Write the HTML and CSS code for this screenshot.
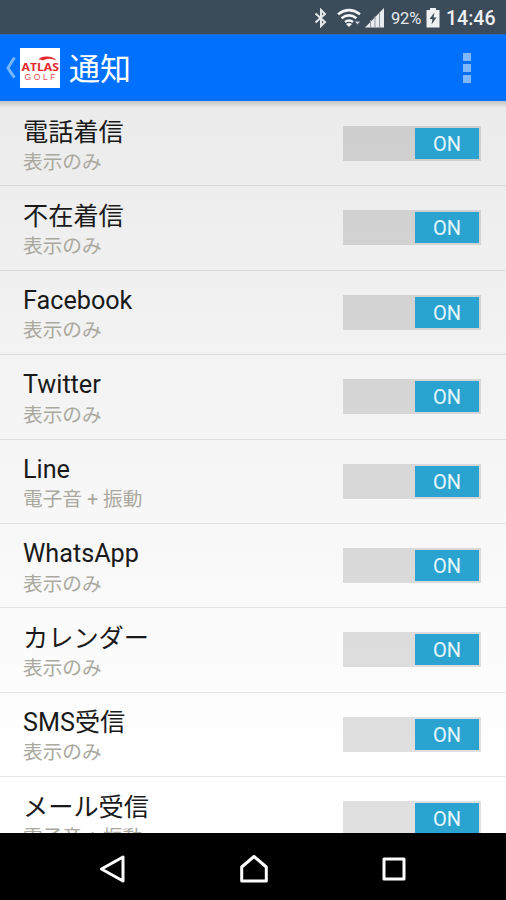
FILE: index.html
```html
<!DOCTYPE html>
<html lang="ja">
<head>
  <meta charset="UTF-8">
  <meta name="viewport" content="width=device-width, initial-scale=1.0">
  <title>通知</title>
  <link rel="stylesheet" href="styles.css">
</head>
<body>
  <div class="status-bar">
    <svg class="bluetooth" width="14" height="20" viewBox="0 0 14 20">
      <path d="M1.500 5.500 11 14 7 18V2l4 4-9.500 8.500" fill="none" stroke="#e4e8eb" stroke-width="2"/>
    </svg>
    <svg class="wifi" width="24" height="20" viewBox="0 0 24 20">
      <g fill="none" stroke="#f1f3f4" stroke-width="2.6">
        <path d="M1 6.200q11-8 22 0"/>
        <path d="M4.500 10.200q7.500-5.500 15 0"/>
        <path d="M8 14q4-3 8 0"/>
      </g>
      <path d="M9 16q3-2 6 0l-3 3z" fill="#f1f3f4"/>
      <path d="M18 13.500h5l-2.500 3z" fill="#c8ced3"/>
    </svg>
    <svg class="signal" width="20" height="20" viewBox="0 0 20 20">
      <path d="M0 19.500 19 0v19.500z" fill="#e9ecee"/>
      <path d="M5.500 12v8M10 8v12M14.500 4v16" stroke="#8b98a2" stroke-width="1"/>
    </svg>
    <span class="percent">92%</span>
    <svg class="battery" width="14" height="20" viewBox="0 0 14 20">
      <path d="M4 0h6v2h3.500v17.500H.5V2H4z" fill="#eef0f2"/>
      <path d="M8.500 4.500 3.500 11h3l-1 5.500 5-7H7.500z" fill="#3c4b57"/>
    </svg>
    <span class="clock">14:46</span>
  </div>

  <div class="header">
    <svg class="back" width="10" height="24" viewBox="0 0 10 24">
      <path d="M8.500 1.500Q5 7 2 12q3 5 6.500 9.500" fill="none" stroke="#75b7ff" stroke-width="3"/>
    </svg>
    <div class="logo">
      <svg width="40" height="40" viewBox="0 0 40 40">
        <path d="M18.500 11.500q2-3 8-3 7 0 10 4-5-2.500-10-1.500l-4 1.500q-1-1.500-4-1z" fill="#e8262a"/>
        <text class="logo-atlas" x="1.500" y="22.500" textLength="37.500" lengthAdjust="spacingAndGlyphs">ATLAS</text>
        <text class="logo-golf" x="4.500" y="31.500" textLength="31">GOLF</text>
      </svg>
    </div>
    <h1>通知</h1>
    <div class="overflow"><i></i><i></i><i></i></div>
  </div>

  <div class="list">
    <div class="row">
      <div class="label"><div class="name">電話着信</div><div class="mode">表示のみ</div></div>
      <div class="switch"><div class="thumb">ON</div></div>
    </div>
    <div class="row">
      <div class="label"><div class="name">不在着信</div><div class="mode">表示のみ</div></div>
      <div class="switch"><div class="thumb">ON</div></div>
    </div>
    <div class="row">
      <div class="label"><div class="name latin">Facebook</div><div class="mode">表示のみ</div></div>
      <div class="switch"><div class="thumb">ON</div></div>
    </div>
    <div class="row">
      <div class="label"><div class="name latin">Twitter</div><div class="mode">表示のみ</div></div>
      <div class="switch"><div class="thumb">ON</div></div>
    </div>
    <div class="row">
      <div class="label"><div class="name latin">Line</div><div class="mode">電子音 + 振動</div></div>
      <div class="switch"><div class="thumb">ON</div></div>
    </div>
    <div class="row">
      <div class="label"><div class="name latin">WhatsApp</div><div class="mode">表示のみ</div></div>
      <div class="switch"><div class="thumb">ON</div></div>
    </div>
    <div class="row">
      <div class="label"><div class="name">カレンダー</div><div class="mode">表示のみ</div></div>
      <div class="switch"><div class="thumb">ON</div></div>
    </div>
    <div class="row">
      <div class="label"><div class="name">SMS受信</div><div class="mode">表示のみ</div></div>
      <div class="switch"><div class="thumb">ON</div></div>
    </div>
    <div class="row">
      <div class="label"><div class="name">メール受信</div><div class="mode">電子音 + 振動</div></div>
      <div class="switch"><div class="thumb">ON</div></div>
    </div>
  </div>

  <div class="nav-bar">
    <svg width="28" height="30" viewBox="0 0 28 30">
      <path d="M24 3v24L2.500 15z"/>
    </svg>
    <svg width="30" height="30" viewBox="0 0 30 30">
      <path d="M15 2.500 27.300 13v14H2.700V13z"/>
    </svg>
    <svg width="28" height="30" viewBox="0 0 28 30">
      <path d="M4 5h20v20H4z"/>
    </svg>
  </div>
</body>
</html>
```
FILE: styles.css
```css
* {
  box-sizing: border-box;
}

body {
  margin: 0;
  height: 900px;
  overflow: hidden;
  display: flex;
  flex-direction: column;
  font-family: Roboto, "Noto Sans CJK JP", sans-serif;
  background: #000;
}

.status-bar {
  flex: none;
  height: 34px;
  display: flex;
  align-items: center;
  justify-content: flex-end;
  padding: 2px 10px 0 0;
  background: #3c4b5a;
  color: #e4e8eb;
}

.bluetooth {
  margin-right: 9px;
}

.wifi {
  margin-right: 4px;
}

.signal {
  margin-right: 6px;
}

.percent {
  width: 31px;
  font-size: 16.5px;
  letter-spacing: -0.2px;
}

.battery {
  margin: 0 6px 0 4px;
}

.clock {
  width: 50px;
  font-size: 19.5px;
  font-weight: 500;
  color: #eef1f3;
}

.header {
  flex: none;
  height: 67px;
  display: flex;
  align-items: center;
  padding: 0 35px 0 6px;
  background: #0070ff;
  border-top: 1px solid #2069c8;
  color: #fff;
}

.back {
  margin-right: 4px;
}

.logo {
  width: 40px;
  height: 40px;
  background: #fff;
}

.logo svg {
  display: block;
}

.logo-atlas {
  font: bold 11px "Open Sans", sans-serif;
  fill: #e8262a;
}

.logo-golf {
  font: 8.5px "Liberation Sans", sans-serif;
  fill: #e8484b;
}

.header h1 {
  margin: 0 auto 0 9px;
  padding-top: 4px;
  font-size: 31px;
  line-height: 44px;
  font-weight: 400;
}

.overflow {
  display: flex;
  flex-direction: column;
  gap: 3px;
}

.overflow i {
  width: 8px;
  height: 8px;
  background: #80b8ff;
}

.list {
  flex: 1;
  min-height: 0;
  padding-top: 1px;
  overflow: hidden;
  background: linear-gradient(#c4c4c4 0, rgba(220, 220, 220, 0) 7px),
    linear-gradient(#ebebeb, #fff 92%);
}

.row {
  height: 84.4px;
  display: flex;
  justify-content: space-between;
  padding: 0 25px 0 23px;
  border-bottom: 1px solid rgba(0, 0, 0, 0.09);
}

.label {
  padding-top: 14.6px;
}

.name {
  font-size: 25.2px;
  line-height: 32px;
  color: #1a1a1a;
}

.name.latin {
  margin-top: -0.6px;
  padding-bottom: 0.6px;
}

.mode {
  font-size: 19.7px;
  line-height: 28px;
  color: #aaa99f;
}

.switch {
  width: 138px;
  height: 35px;
  margin-top: 24px;
  padding: 2px;
  display: flex;
  justify-content: flex-end;
  background: rgba(0, 0, 0, 0.12);
}

.thumb {
  width: 64px;
  height: 31px;
  background: #2ba3d0;
  color: #e6f7fd;
  font-size: 20px;
  line-height: 33px;
  text-align: center;
}

.nav-bar {
  flex: none;
  height: 67px;
  display: flex;
  align-items: center;
  justify-content: space-between;
  padding: 4px 98px 0 99px;
  background: #000;
}

.nav-bar path {
  fill: none;
  stroke: #fff;
  stroke-width: 3;
  stroke-linejoin: round;
}
```
